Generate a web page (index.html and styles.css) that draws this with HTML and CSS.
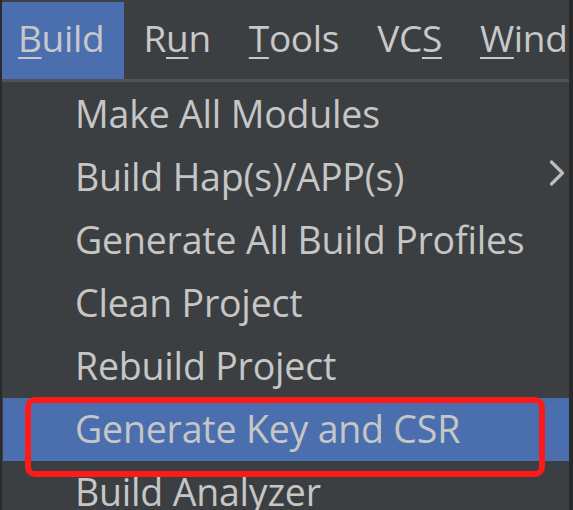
FILE: index.html
```html
<!DOCTYPE html>
<html>
<head>
<meta charset="utf-8">
<link rel="stylesheet" href="styles.css">
</head>
<body>
<div class="screen">
  <div class="menubar">
    <div class="mb-item active"><span class="u">B</span>uild</div>
    <div class="mb-item">R<span class="u">u</span>n</div>
    <div class="mb-item"><span class="u">T</span>ools</div>
    <div class="mb-item">VC<span class="u">S</span></div>
    <div class="mb-item"><span class="u">W</span>ind</div>
  </div>
  <div class="divider"></div>
  <div class="menu">
    <div class="row">Make All Modules</div>
    <div class="row">Build Hap(s)/APP(s)
      <svg class="chev" width="18" height="28" viewBox="0 0 18 28"><path d="M3.5 3 L14.5 14 L3.5 25" fill="none" stroke="#bdbdbd" stroke-width="3.2" stroke-linecap="round" stroke-linejoin="round"/></svg>
    </div>
    <div class="row">Generate All Build Profiles</div>
    <div class="row">Clean Project</div>
    <div class="row">Rebuild Project</div>
    <div class="row selected">Generate Key and CSR</div>
    <div class="row">Build Analyzer</div>
    <div class="callout"></div>
  </div>
</div>
</body>
</html>
```
FILE: styles.css
```css
html, body {
  margin: 0;
  padding: 0;
  background: #2b2b2b;
  overflow: hidden;
}
.screen {
  width: 567px;
  height: 510px;
  margin-left: 2px;
  border-right: 4px solid #2a2a2a;
  background: #3c3f41;
  font-family: "Open Sans", "Noto Sans", sans-serif;
  color: #c4c4c4;
  overflow: hidden;
}
.menubar {
  display: flex;
  height: 79px;
  padding-top: 2px;
  box-sizing: border-box;
  align-items: stretch;
  font-size: 37px;
}
.mb-item {
  display: flex;
  align-items: center;
  padding: 0 19px 6px 19px;
  color: #c8c8c8;
  letter-spacing: -0.3px;
}
.mb-item.active {
  background: #4b6eaf;
  padding-left: 16px;
  padding-right: 20px;
}
.u {
  text-decoration: underline;
  text-decoration-thickness: 2px;
  text-underline-offset: 5px;
}
.divider {
  height: 3px;
  background: #505355;
}
.menu {
  position: relative;
  padding-top: 1px;
  font-size: 37.5px;
}
.row {
  height: 63px;
  display: flex;
  align-items: center;
  padding-left: 73px;
  padding-bottom: 2px;
  box-sizing: border-box;
  position: relative;
  letter-spacing: -0.2px;
  color: #c6c6c6;
}
.row.selected {
  background: #4b6eaf;
  margin-left: 1px;
  padding-left: 72px;
}
.chev {
  position: absolute;
  right: 3px;
  top: 13px;
}
.callout {
  position: absolute;
  left: 23px;
  top: 315px;
  width: 520px;
  height: 80px;
  border: 6px solid #ff1a1a;
  border-radius: 10px;
  box-sizing: border-box;
}
```
